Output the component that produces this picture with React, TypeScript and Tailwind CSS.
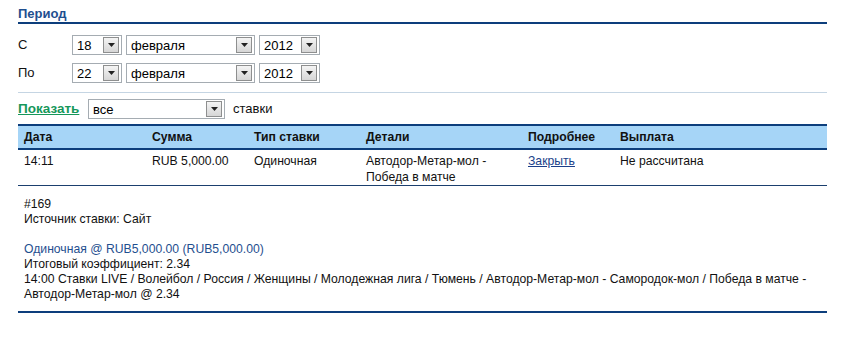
import React from "react";

function Sel({ value, w }: { value: string; w: string }) {
  return (
    <div className={`${w} h-[20px] border border-[#a5acb2] bg-white flex items-center justify-between pl-[4px] pr-[2px]`}>
      <span className="text-[13px] leading-none text-black">{value}</span>
      <div className="w-[16px] h-[16px] border border-[#8e8f8f] bg-gradient-to-b from-[#f4f4f4] to-[#d6d6d6] flex items-center justify-center">
        <svg width="7" height="4" viewBox="0 0 7 4"><path d="M0 0h7L3.5 4z" fill="#222" /></svg>
      </div>
    </div>
  );
}

export default function App() {
  const cols = "grid grid-cols-[128px_102px_112px_162px_92px_1fr]";
  return (
    <div className="w-[848px] h-[347px] bg-white text-[12.2px] text-[#111] px-[18px] pt-[6px]" style={{ fontFamily: '"Liberation Sans", Arial, sans-serif' }}>
      <div className="w-[809px]">
        <div className="text-[13px] font-bold text-[#1f4f8f] leading-[15px] pb-[1px] border-b-2 border-[#0d3e7c]">Период</div>
        <div className="flex flex-col gap-[8px] mt-[11px]">
          {[["С", "18"], ["По", "22"]].map(([l, d]) => (
            <div key={l} className="flex items-center">
              <span className="w-[54px] text-[13px]">{l}</span>
              <Sel value={d} w="w-[50px]" />
              <div className="w-[4px]" />
              <Sel value="февраля" w="w-[129px]" />
              <div className="w-[4px]" />
              <Sel value="2012" w="w-[61px]" />
            </div>
          ))}
        </div>
        <div className="mt-[9px] border-t border-[#c5d5e3]" />
        <div className="flex items-center mt-[6px]">
          <a className="w-[70px] text-[13.5px] font-bold text-[#16975a] underline">Показать</a>
          <Sel value="все" w="w-[137px]" />
          <span className="ml-[8px] text-[13px]">ставки</span>
        </div>
        <div className="mt-[5px] border-t-2 border-b-2 border-[#0d3e7c] bg-[#a6d5f7] h-[26px] font-bold">
          <div className={`${cols} h-full items-center`}>
            {["Дата", "Сумма", "Тип ставки", "Детали", "Подробнее", "Выплата"].map((h) => (
              <div key={h} className="pl-[6px]">{h}</div>
            ))}
          </div>
        </div>
        <div className={`${cols} pt-[3px] h-[36px] border-b border-[#1b3f6e] leading-[16px]`}>
          <div className="pl-[6px]">14:11</div>
          <div className="pl-[6px]">RUB 5,000.00</div>
          <div className="pl-[6px]">Одиночная</div>
          <div className="pl-[6px]">Автодор-Метар-мол - Победа в матче</div>
          <div className="pl-[6px]"><a className="text-[#1a3f8a] underline">Закрыть</a></div>
          <div className="pl-[6px]">Не рассчитана</div>
        </div>
        <div className="pl-[6px] pt-[11px] leading-[15px] h-[127px] border-b-2 border-[#0d3e7c]">
          <div>#169</div>
          <div>Источник ставки: Сайт</div>
          <div className="h-[15px]" />
          <div className="text-[#1f4f8f]">Одиночная @ RUB5,000.00 (RUB5,000.00)</div>
          <div>Итоговый коэффициент: 2.34</div>
          <div>14:00 Ставки LIVE / Волейбол / Россия / Женщины / Молодежная лига / Тюмень / Автодор-Метар-мол - Самородок-мол / Победа в матче - Автодор-Метар-мол @ 2.34</div>
        </div>
      </div>
    </div>
  );
}
